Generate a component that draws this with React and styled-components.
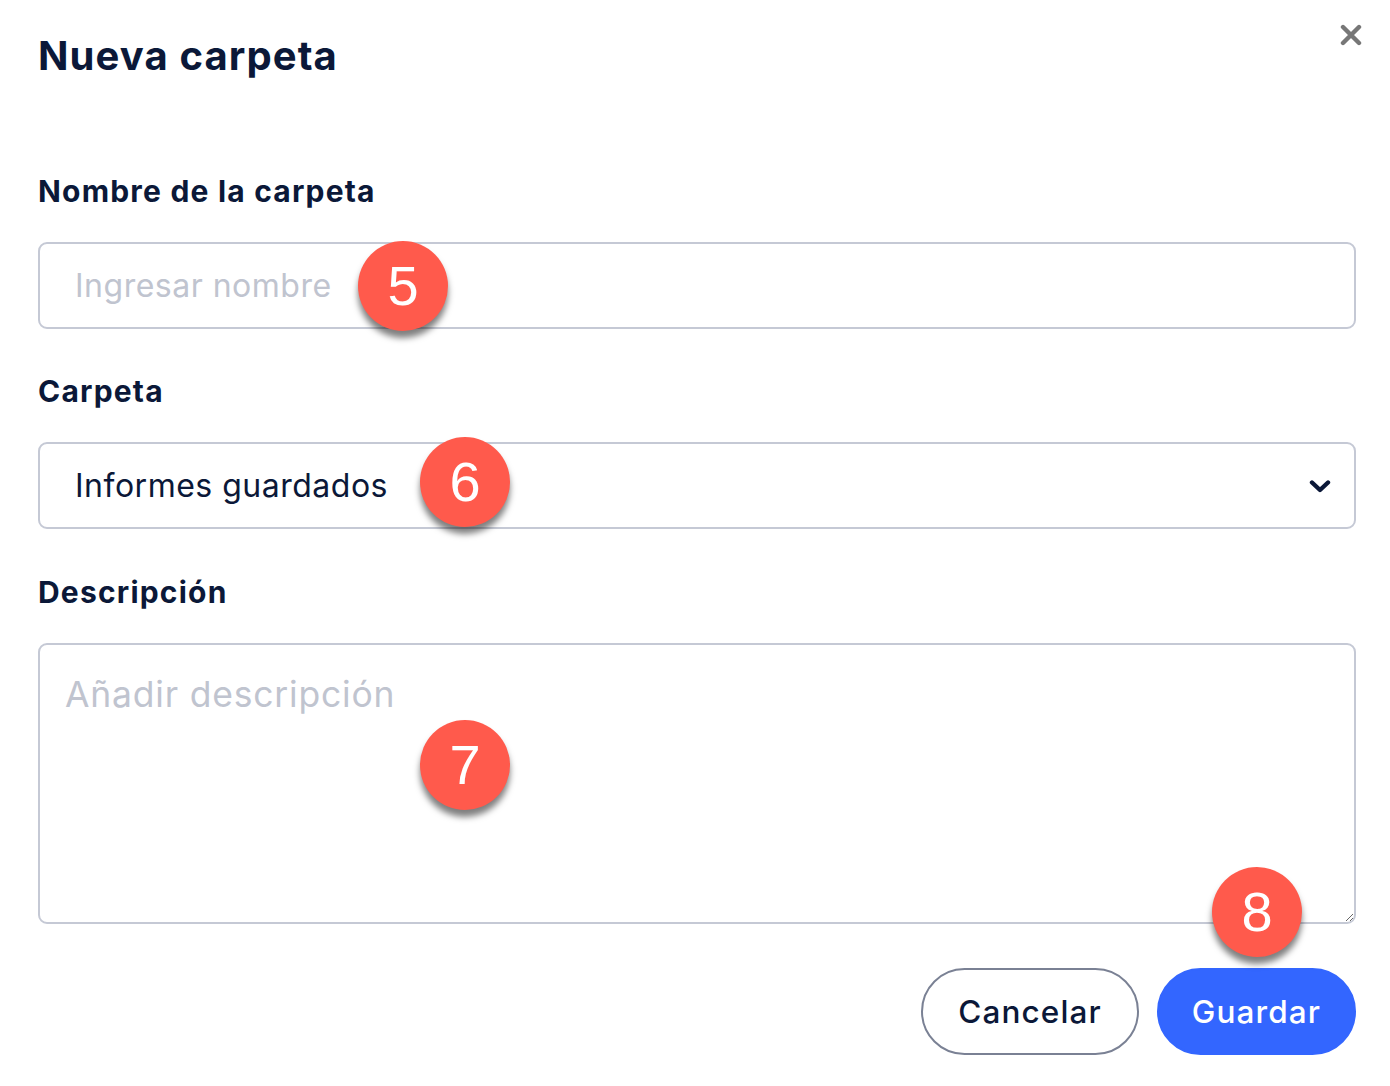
import React from "react";
import styled, { createGlobalStyle } from "styled-components";

const Global = createGlobalStyle`
  html, body { margin: 0; padding: 0; background: #ffffff; }
  body { font-family: Inter, "Noto Sans", sans-serif; color: #0b1838; }
  * { box-sizing: border-box; }
`;

const Dialog = styled.div`
  position: relative;
  width: 1390px;
  min-height: 1086px;
  padding: 30px 34px 30px 38px;
  display: flex;
  flex-direction: column;
  background: #fff;
`;

const Title = styled.h1`
  margin: 0;
  font-size: 40px;
  line-height: 52px;
  font-weight: 700;
  letter-spacing: 1.1px;
  color: #0b1838;
`;

const CloseButton = styled.button`
  position: absolute;
  top: 22px;
  right: 26px;
  width: 26px;
  height: 26px;
  padding: 0;
  border: none;
  background: transparent;
  display: flex;
  align-items: center;
  justify-content: center;
  cursor: pointer;
`;

const Form = styled.div`
  display: flex;
  flex-direction: column;
  margin-top: 91px;
`;

const Field = styled.div`
  display: flex;
  flex-direction: column;
  gap: 33px;
  margin-bottom: ${(p) => p.$mb || 0}px;
`;

const Label = styled.label`
  font-size: 30px;
  line-height: 36px;
  font-weight: 700;
  letter-spacing: 1.2px;
  color: #0b1838;
`;

const Control = styled.div`
  position: relative;
`;

const TextInput = styled.input`
  width: 100%;
  height: 87px;
  border: 2px solid #c5c9d5;
  border-radius: 9px;
  padding: 0 35px;
  font-family: Inter, "Noto Sans", sans-serif;
  font-size: 32px;
  letter-spacing: 0.5px;
  color: #0b1838;
  outline: none;
  &::placeholder { color: #c0c4cf; }
`;

const SelectBox = styled.div`
  width: 100%;
  height: 87px;
  border: 2px solid #c5c9d5;
  border-radius: 9px;
  padding: 0 23px 0 35px;
  display: flex;
  align-items: center;
  justify-content: space-between;
  font-size: 32px;
  letter-spacing: 0.5px;
  color: #0b1838;
`;

const TextArea = styled.textarea`
  display: block;
  width: 100%;
  height: 281px;
  border: 2px solid #c5c9d5;
  border-radius: 9px;
  padding: 30px 25px;
  font-family: Inter, "Noto Sans", sans-serif;
  font-size: 35.5px;
  line-height: 40px;
  letter-spacing: 0.8px;
  color: #0b1838;
  outline: none;
  &::placeholder { color: #c0c4cf; }
`;

const Badge = styled.div`
  position: absolute;
  left: ${(p) => p.$x}px;
  top: ${(p) => p.$y}px;
  width: 90px;
  height: 90px;
  border-radius: 50%;
  background: #ff5a4c;
  color: #fff;
  display: flex;
  align-items: center;
  justify-content: center;
  font-family: "Liberation Sans", Arial, sans-serif;
  font-size: 56px;
  line-height: 1;
  box-shadow: 0 7px 6px rgba(0, 0, 0, 0.5);
  z-index: 2;
`;

const Actions = styled.div`
  display: flex;
  justify-content: flex-end;
  gap: 18px;
  margin-top: 44px;
`;

const Button = styled.button`
  height: 87px;
  border-radius: 44px;
  padding: 0 ${(p) => p.$px}px;
  font-family: Inter, "Noto Sans", sans-serif;
  font-size: 31.5px;
  font-weight: 500;
  letter-spacing: 1.1px;
  cursor: pointer;
  border: 2px solid ${(p) => (p.$primary ? "#3366ff" : "#7a8194")};
  background: ${(p) => (p.$primary ? "#3366ff" : "#ffffff")};
  color: ${(p) => (p.$primary ? "#ffffff" : "#0b1838")};
`;

export default function App() {
  return (
    <>
      <Global />
      <Dialog>
        <Title>Nueva carpeta</Title>
        <CloseButton aria-label="Cerrar">
          <svg width="22" height="22" viewBox="0 0 22 22">
            <path d="M3 3 L19 19 M19 3 L3 19" stroke="#777" strokeWidth="4.4" strokeLinecap="round" />
          </svg>
        </CloseButton>
        <Form>
          <Field $mb={44}>
            <Label>Nombre de la carpeta</Label>
            <Control>
              <TextInput placeholder="Ingresar nombre" />
              <Badge $x={320} $y={-1}>5</Badge>
            </Control>
          </Field>
          <Field $mb={45}>
            <Label>Carpeta</Label>
            <Control>
              <SelectBox>
                <span>Informes guardados</span>
                <svg width="22" height="16" viewBox="0 0 22 16">
                  <path d="M3 4.5 L11 12 L19 4.5" fill="none" stroke="#0b1838" strokeWidth="4.4" strokeLinecap="round" strokeLinejoin="round" />
                </svg>
              </SelectBox>
              <Badge $x={382} $y={-5}>6</Badge>
            </Control>
          </Field>
          <Field>
            <Label>Descripción</Label>
            <Control>
              <TextArea placeholder="Añadir descripción" />
              <Badge $x={382} $y={77}>7</Badge>
              <Badge $x={1174} $y={224}>8</Badge>
            </Control>
          </Field>
          <Actions>
            <Button $px={35}>Cancelar</Button>
            <Button $primary $px={33}>Guardar</Button>
          </Actions>
        </Form>
      </Dialog>
    </>
  );
}
